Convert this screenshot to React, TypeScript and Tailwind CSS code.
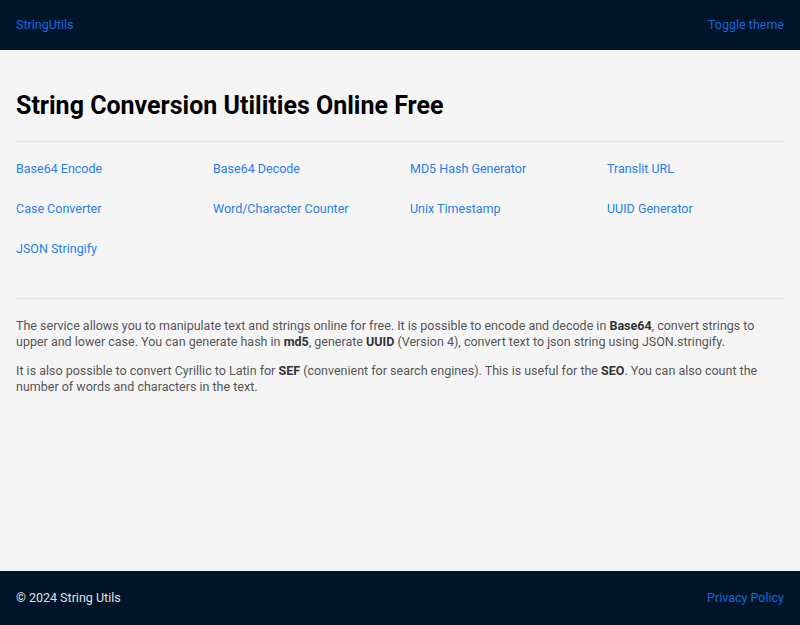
const tools = [
  "Base64 Encode",
  "Base64 Decode",
  "MD5 Hash Generator",
  "Translit URL",
  "Case Converter",
  "Word/Character Counter",
  "Unix Timestamp",
  "UUID Generator",
  "JSON Stringify",
]

export default function App() {
  return (
    <div
      className="flex flex-col min-h-[625px] bg-[#f5f5f5]"
      style={{ fontFamily: "Roboto, 'Noto Sans', sans-serif" }}
    >
      <header className="flex items-center justify-between h-[50px] px-4 bg-[#001529] text-[12.5px]">
        <a href="#" className="text-[#1668dc]">StringUtils</a>
        <a href="#" className="text-[#1668dc]">Toggle theme</a>
      </header>

      <main className="flex-1 px-4">
        <h1 className="mt-[41px] text-[25px] leading-[30px] font-bold text-black">
          String Conversion Utilities Online Free
        </h1>
        <hr className="mt-[20px] border-t border-[#e6e6e6]" />

        <div className="grid grid-cols-4 gap-x-5 pt-[19px]">
          {tools.map((t) => (
            <a
              key={t}
              href="#"
              className="h-[40px] text-[12.5px] leading-[16px] text-[#2a7ee8]"
            >
              {t}
            </a>
          ))}
        </div>
        <hr className="mt-[17px] border-t border-[#e6e6e6]" />

        <div className="pt-[19px] text-[12.5px] leading-[16px] text-[#555]">
          <p>
            The service allows you to manipulate text and strings online for free. It is possible
            to encode and decode in <b className="text-[#333]">Base64</b>, convert strings to upper and
            lower case. You can generate hash in <b className="text-[#333]">md5</b>, generate{" "}
            <b className="text-[#333]">UUID</b> (Version 4), convert text to json string using
            JSON.stringify.
          </p>
          <p className="mt-[13px]">
            It is also possible to convert Cyrillic to Latin for <b className="text-[#333]">SEF</b>{" "}
            (convenient for search engines). This is useful for the{" "}
            <b className="text-[#333]">SEO</b>. You can also count the number of words and characters
            in the text.
          </p>
        </div>
      </main>

      <footer className="flex items-center justify-between h-[54px] px-4 bg-[#001529] text-[12.5px]">
        <span className="text-[#e0e0e0]">© 2024 String Utils</span>
        <a href="#" className="text-[#1668dc]">Privacy Policy</a>
      </footer>
    </div>
  )
}
